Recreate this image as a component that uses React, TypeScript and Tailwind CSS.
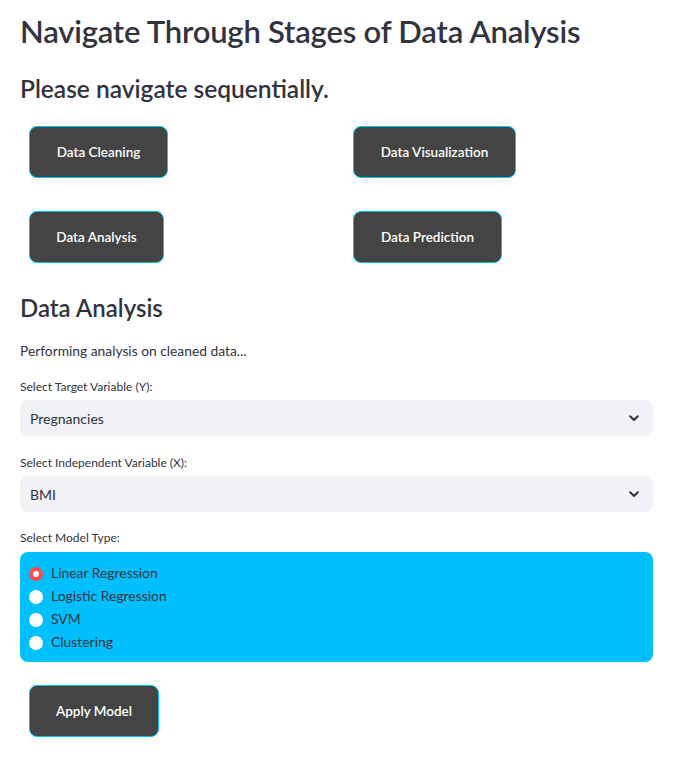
import React from "react";

const font = { fontFamily: '"Source Sans Pro", Lato, "Noto Sans", sans-serif' };

function NavButton({ label, w }: { label: string; w: string }) {
  return (
    <button
      className={`h-[52px] ${w} rounded-lg border border-[#00bfff] bg-[#444444] text-[13.5px] font-semibold text-white`}
    >
      {label}
    </button>
  );
}

function Select({ value }: { value: string }) {
  return (
    <div className="flex h-9 items-center justify-between rounded-lg bg-[#f0f2f6] pl-[10px] pr-[14px] text-[14px] text-[#31333f]">
      <span>{value}</span>
      <svg width="10" height="7" viewBox="0 0 10 7" fill="none">
        <path d="M1.2 1.3 L5 5 L8.8 1.3" stroke="#31333f" strokeWidth="2" strokeLinecap="round" strokeLinejoin="round" />
      </svg>
    </div>
  );
}

function Radio({ label, checked }: { label: string; checked?: boolean }) {
  return (
    <div className="flex h-[23px] items-center">
      {checked ? (
        <span className="flex h-[14px] w-[14px] items-center justify-center rounded-full bg-[#ff4b4b]">
          <span className="h-[6px] w-[6px] rounded-full bg-white" />
        </span>
      ) : (
        <span className="h-[14px] w-[14px] rounded-full bg-white" />
      )}
      <span className="ml-[8px] text-[13.9px] text-[#31333f]">{label}</span>
    </div>
  );
}

export default function App() {
  return (
    <div className="min-h-[767px] bg-white pl-5 pr-[37px] text-[#31333f]" style={font}>
      <h1 className="pt-[11px] text-[31px] font-semibold leading-[40px] tracking-[-0.2px]">
        Navigate Through Stages of Data Analysis
      </h1>
      <h2 className="mt-[22px] text-[24.5px] font-semibold leading-[32px]">Please navigate sequentially.</h2>

      <div className="mt-[21px] grid grid-cols-[324px_1fr] gap-y-[33px] pl-[9px]">
        <NavButton label="Data Cleaning" w="w-[139px]" />
        <NavButton label="Data Visualization" w="w-[163px]" />
        <NavButton label="Data Analysis" w="w-[135px]" />
        <NavButton label="Data Prediction" w="w-[149px]" />
      </div>

      <h2 className="mt-[29px] text-[24px] font-semibold leading-[32px]">Data Analysis</h2>
      <p className="mt-[17px] text-[13.8px] leading-[20px]">Performing analysis on cleaned data...</p>

      <div className="mt-[18px] text-[12px] leading-[16px]">Select Target Variable (Y):</div>
      <div className="mt-[5px]">
        <Select value="Pregnancies" />
      </div>

      <div className="mt-[19px] text-[12px] leading-[16px]">Select Independent Variable (X):</div>
      <div className="mt-[5px]">
        <Select value="BMI" />
      </div>

      <div className="mt-[18px] text-[12px] leading-[16px]">Select Model Type:</div>
      <div className="mt-[6px] rounded-lg bg-[#00bfff] pb-[8px] pl-[9px] pt-[10px]">
        <Radio label="Linear Regression" checked />
        <Radio label="Logistic Regression" />
        <Radio label="SVM" />
        <Radio label="Clustering" />
      </div>

      <div className="mt-[23px] pl-[9px]">
        <NavButton label="Apply Model" w="w-[130px]" />
      </div>
    </div>
  );
}
